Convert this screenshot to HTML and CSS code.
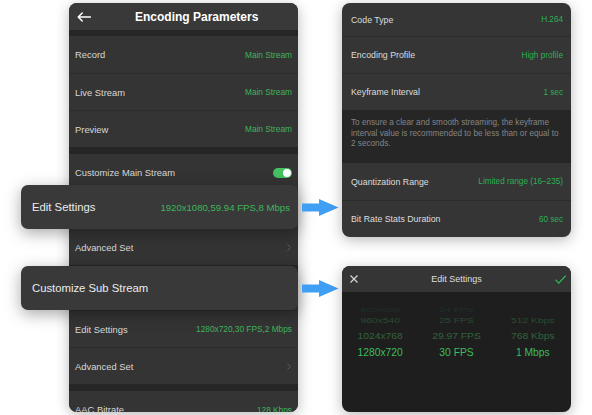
FILE: index.html
```html
<!DOCTYPE html>
<html lang="en">
<head>
<meta charset="utf-8">
<title>Encoding Parameters</title>
<link rel="stylesheet" href="styles.css">
</head>
<body>
<div class="canvas">
  <section class="phone">
    <header class="phone-head">
      <svg class="back" viewBox="0 0 14 10" aria-hidden="true"><path d="M13.5 5H1.2M5.2 1L1.2 5l4 4" fill="none" stroke="#fff" stroke-width="1.5" stroke-linecap="round" stroke-linejoin="round"/></svg>
      <h1 class="title">Encoding Parameters</h1>
    </header>
    <div class="band band-6"></div>
    <div class="row"><span class="label">Record</span><span class="value">Main Stream</span></div>
    <div class="row"><span class="label">Live Stream</span><span class="value">Main Stream</span></div>
    <div class="row"><span class="label">Preview</span><span class="value">Main Stream</span></div>
    <div class="band band-7"></div>
    <div class="row"><span class="label">Customize Main Stream</span><span class="toggle"><span class="knob"></span></span></div>
    <div class="row row-covered"></div>
    <div class="row"><span class="label">Advanced Set</span><svg class="chev" viewBox="0 0 4 7" aria-hidden="true"><path d="M0.5 0.5l3 3-3 3" fill="none" stroke="#5a5a5a" stroke-width="1"/></svg></div>
    <div class="band band-8"></div>
    <div class="row row-covered"></div>
    <div class="row"><span class="label">Edit Settings</span><span class="value">1280x720,30 FPS,2 Mbps</span></div>
    <div class="row"><span class="label">Advanced Set</span><svg class="chev" viewBox="0 0 4 7" aria-hidden="true"><path d="M0.5 0.5l3 3-3 3" fill="none" stroke="#5a5a5a" stroke-width="1"/></svg></div>
    <div class="band band-7"></div>
    <div class="row"><span class="label">AAC Bitrate</span><span class="value">128 Kbps</span></div>
  </section>

  <div class="callout callout-main"><span class="callout-label">Edit Settings</span><span class="callout-value">1920x1080,59.94 FPS,8 Mbps</span></div>
  <div class="callout callout-sub"><span class="callout-label">Customize Sub Stream</span></div>

  <svg class="arrow arrow-1" viewBox="0 0 37 17" aria-hidden="true"><path d="M0 4.5H17V0L36.5 8.5L17 17V12.5H0Z" fill="#3f9ff4"/></svg>
  <svg class="arrow arrow-2" viewBox="0 0 37 17" aria-hidden="true"><path d="M0 4.5H17V0L36.5 8.5L17 17V12.5H0Z" fill="#3f9ff4"/></svg>

  <section class="panel panel-top">
    <div class="prow prow-first"><span class="plabel">Code Type</span><span class="pvalue">H.264</span></div>
    <div class="prow"><span class="plabel">Encoding Profile</span><span class="pvalue">High profile</span></div>
    <div class="prow"><span class="plabel">Keyframe Interval</span><span class="pvalue">1 sec</span></div>
    <p class="note">To ensure a clear and smooth streaming, the keyframe<br>interval value is recommended to be less than or equal to<br>2 seconds.</p>
    <div class="prow"><span class="plabel">Quantization Range</span><span class="pvalue">Limited range (16–235)</span></div>
    <div class="prow"><span class="plabel">Bit Rate Stats Duration</span><span class="pvalue">60 sec</span></div>
  </section>

  <section class="panel panel-bottom">
    <header class="sheet-head">
      <svg class="x-icon" viewBox="0 0 8 8" aria-hidden="true"><path d="M0.5 0.5l7 7M7.5 0.5l-7 7" stroke="#d8d8d8" stroke-width="1.2"/></svg>
      <h2 class="sheet-title">Edit Settings</h2>
      <svg class="check-icon" viewBox="0 0 11 9" aria-hidden="true"><path d="M0.4 4.6l3.4 3.5L10.6 0.6" fill="none" stroke="#2fb552" stroke-width="1.3"/></svg>
    </header>
    <div class="picker">
      <div class="prow-pick pick-1"><span>800x600</span><span>24 FPS</span><span></span></div>
      <div class="prow-pick pick-2"><span>960x540</span><span>25 FPS</span><span>512 Kbps</span></div>
      <div class="prow-pick pick-3"><span>1024x768</span><span>29.97 FPS</span><span>768 Kbps</span></div>
      <div class="prow-pick pick-4"><span>1280x720</span><span>30 FPS</span><span>1 Mbps</span></div>
    </div>
  </section>
</div>
</body>
</html>
```

FILE: styles.css
```css
* { box-sizing: border-box; margin: 0; padding: 0; }

body {
  background: #ffffff;
  font-family: "Liberation Sans", Arial, sans-serif;
}

.canvas {
  position: relative;
  width: 592px;
  height: 415px;
  overflow: hidden;
}

/* left phone */
.phone {
  position: absolute;
  left: 69px;
  top: 3px;
  width: 229px;
  height: 409px;
  border-radius: 8px;
  overflow: hidden;
  background: #343434;
  box-shadow: 0 3px 14px rgba(0, 0, 0, 0.28);
  display: flex;
  flex-direction: column;
}

.phone-head {
  flex: none;
  height: 27px;
  background: #393939;
  display: flex;
  align-items: center;
  padding-left: 8px;
}

.back { width: 14px; height: 10px; flex: none; }

.title {
  margin-left: 44px;
  font-size: 12px;
  font-weight: bold;
  color: #ffffff;
}

.band { flex: none; background: #262626; }
.band-6 { height: 6px; }
.band-7 { height: 7px; }
.band-8 { height: 8px; }

.row {
  flex: none;
  height: 37px;
  display: flex;
  align-items: center;
  justify-content: space-between;
  padding: 0 6px;
  border-top: 1px solid #2c2c2c;
  background: #343434;
}
.band + .row { border-top: none; }

.label { font-size: 9.4px; color: #d8d8d8; }
.value { font-size: 8.3px; color: #3fb55c; }

.toggle {
  width: 19px;
  height: 10px;
  border-radius: 5px;
  background: #44c160;
  display: flex;
  justify-content: flex-end;
  align-items: center;
  padding: 0 1px;
}
.knob {
  width: 8px;
  height: 8px;
  border-radius: 50%;
  background: #ffffff;
}

.chev { width: 4px; height: 7px; margin-right: 1px; }

/* callouts */
.callout {
  position: absolute;
  left: 21px;
  width: 277px;
  height: 44px;
  border-radius: 7px;
  background: #393939;
  box-shadow: 0 4px 16px rgba(0, 0, 0, 0.35);
  display: flex;
  align-items: center;
  justify-content: space-between;
  padding: 0 8px 0 11px;
}
.callout-main { top: 185px; }
.callout-sub { top: 266px; }

.callout-label { font-size: 11.3px; color: #ececec; }
.callout-value { font-size: 9.6px; color: #3fb55c; }

/* arrows */
.arrow {
  position: absolute;
  left: 302px;
  width: 37px;
  height: 17px;
}
.arrow-1 { top: 199px; }
.arrow-2 { top: 280px; }

/* right panels */
.panel {
  position: absolute;
  left: 342px;
  width: 229px;
  border-radius: 8px;
  overflow: hidden;
  box-shadow: 0 3px 14px rgba(0, 0, 0, 0.28);
  display: flex;
  flex-direction: column;
}
.panel-top { top: 3px; height: 234px; background: #353535; }
.panel-bottom { top: 266px; height: 146px; background: #1e1e1e; }

.prow {
  flex: none;
  height: 37px;
  display: flex;
  align-items: center;
  justify-content: space-between;
  padding: 0 8px 0 9px;
  border-top: 1px solid #2d2d2d;
}
.prow-first { height: 33px; border-top: none; }
.note + .prow { border-top: none; }

.plabel { font-size: 8.8px; color: #dddddd; }
.pvalue { font-size: 8.2px; color: #2bb153; }

.note {
  flex: none;
  height: 53px;
  background: #262626;
  padding: 8px 6px 0 9px;
  font-size: 8.2px;
  line-height: 10.5px;
  color: #858585;
}

.sheet-head {
  flex: none;
  height: 26px;
  background: #353535;
  display: flex;
  align-items: center;
  justify-content: space-between;
  padding: 0 5px 0 8px;
}
.x-icon { width: 8px; height: 8px; }
.check-icon { width: 11px; height: 9px; }
.sheet-title { font-size: 9px; font-weight: normal; color: #dddddd; }

.picker {
  flex: 1;
  padding-top: 13px;
  display: flex;
  flex-direction: column;
}

.prow-pick {
  display: grid;
  grid-template-columns: 1fr 1fr 1fr;
  align-items: center;
  text-align: center;
  font-size: 10.3px;
}
.prow-pick span { display: block; }

.pick-1 { height: 8px; color: #1d3224; }
.pick-1 span { transform: scaleY(0.45); }
.pick-2 { height: 14px; color: #294c32; }
.pick-2 span { transform: scaleY(0.78); }
.pick-3 { height: 16px; color: #33633d; }
.pick-3 span { transform: scaleY(0.92); }
.pick-4 { height: 18px; color: #3cbd5d; }
```
